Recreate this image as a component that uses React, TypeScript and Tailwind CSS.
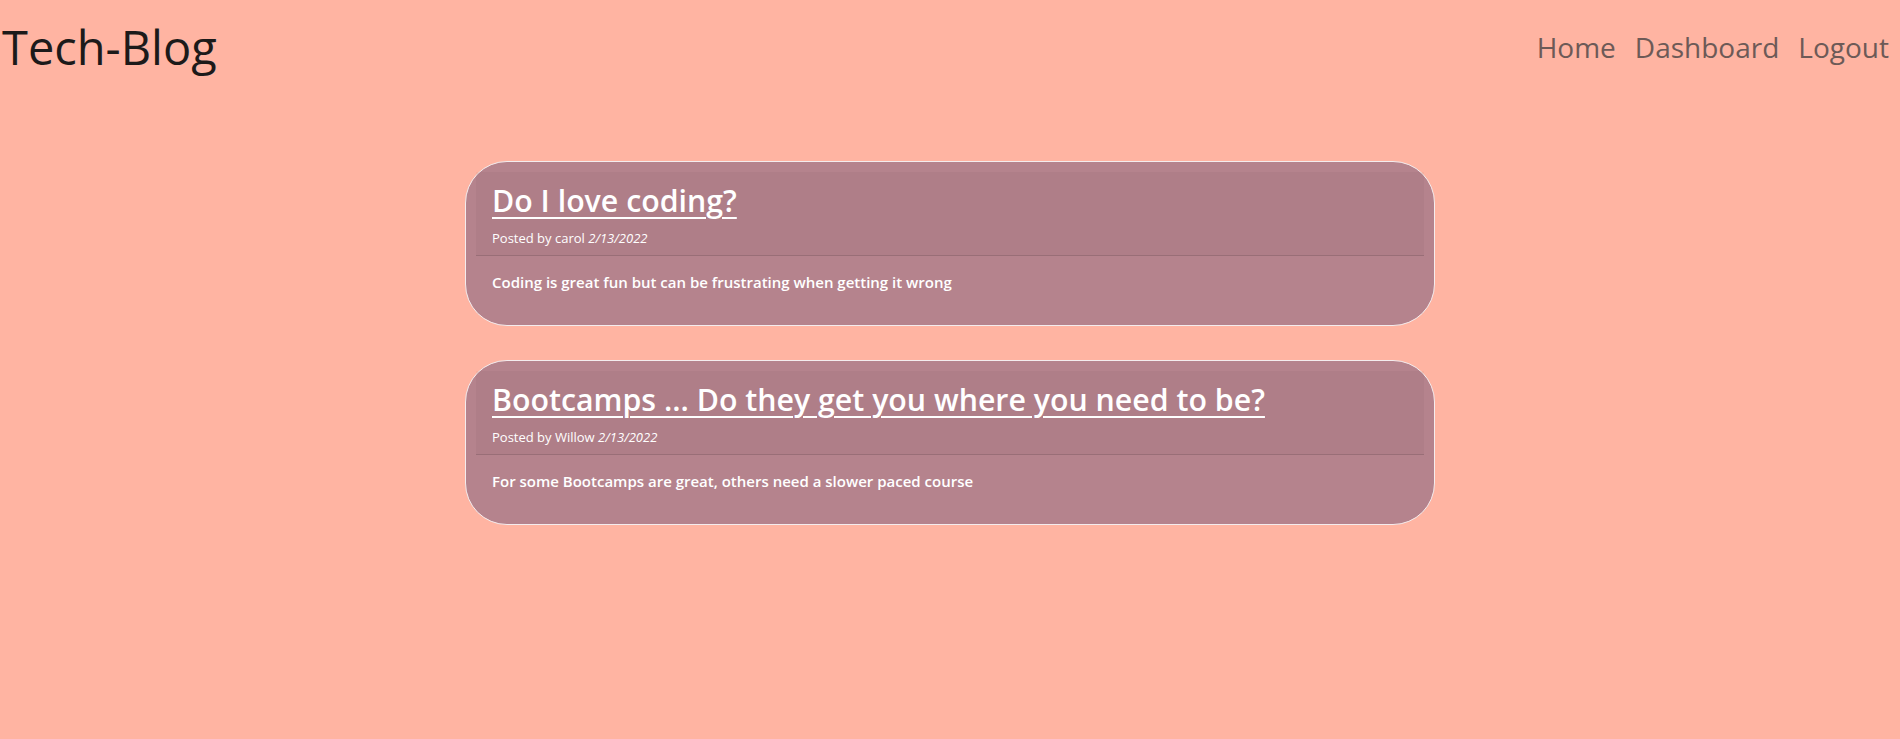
export default function App() {
  const posts = [
    {
      title: "Do I love coding?",
      author: "carol",
      date: "2/13/2022",
      body: "Coding is great fun but can be frustrating when getting it wrong",
    },
    {
      title: "Bootcamps ... Do they get you where you need to be?",
      author: "Willow",
      date: "2/13/2022",
      body: "For some Bootcamps are great, others need a slower paced course",
    },
  ];
  return (
    <div
      className="min-h-[739px] w-full bg-[#ffb4a2] text-[#212529]"
      style={{ fontFamily: '"Open Sans", "Noto Sans", sans-serif' }}
    >
      <header className="flex items-start justify-between h-[161px]">
        <h1 className="mt-[19px] pl-[2px] text-[47px] leading-[1.2] font-normal text-[#1c1a1a]">Tech-Blog</h1>
        <nav className="mt-[31px] mr-[11px] flex gap-[19px] text-[28px] leading-[1.2] text-[#6d5a57]">
          <a href="#">Home</a>
          <a href="#">Dashboard</a>
          <a href="#">Logout</a>
        </nav>
      </header>
      <main className="flex flex-col items-center gap-[34px]">
        {posts.map((p) => (
          <article
            key={p.title}
            className="w-[970px] rounded-[42px] border border-[#f4ecee] bg-[#b5838d] p-[10px] text-white"
          >
            <div className="border-b border-[rgba(0,0,0,0.125)] bg-[rgba(0,0,0,0.03)] px-4 pt-[10px] pb-[6px]">
              <h2 className="mb-2 text-[30.3px] leading-[38px] font-semibold">
                <a href="#" className="underline decoration-2 underline-offset-[5px]">{p.title}</a>
              </h2>
              <p className="text-[13px] leading-[21px]">
                Posted by {p.author} <em>{p.date}</em>
              </p>
            </div>
            <div className="h-[59px] px-4 pt-[14px]">
              <p className="text-[15px] leading-[24px] font-semibold">{p.body}</p>
            </div>
          </article>
        ))}
      </main>
    </div>
  );
}
